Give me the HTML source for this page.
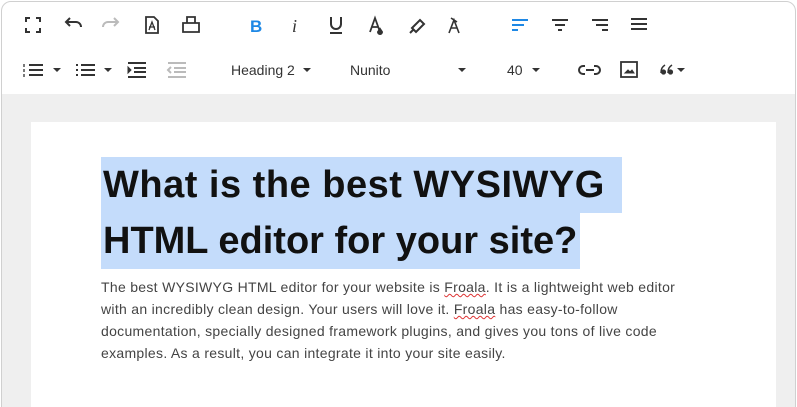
<!DOCTYPE html>
<html><head><meta charset="utf-8"><style>
*{margin:0;padding:0;box-sizing:border-box}
html,body{width:797px;height:407px;overflow:hidden}
body{background:#fff;font-family:"Liberation Sans",sans-serif;position:relative}
.frame{position:absolute;left:1px;top:1px;width:795px;height:460px;border:1px solid #d0d0d0;border-radius:10px;overflow:hidden;background:#fff}
.grey{position:absolute;left:0;top:92px;width:100%;height:400px;background:#efefef}
.page{position:absolute;left:29px;top:120px;width:745px;height:400px;background:#fff}
.ic{position:absolute}
.t{position:absolute;font-size:14px;color:#333;white-space:nowrap}
.car{position:absolute;width:0;height:0;border-left:4px solid transparent;border-right:4px solid transparent;border-top:4px solid #333}
.hl{position:absolute;left:101px;background:#c4dcfb;height:56px;font-weight:900;font-size:38px;letter-spacing:0.5px;color:#111;white-space:nowrap;line-height:56px}
.p{position:absolute;left:101px;font-size:14px;letter-spacing:0.3px;color:#444;white-space:nowrap;line-height:22px}
u{text-decoration:underline wavy #d33;text-decoration-thickness:1px}
</style></head><body>
<div class="frame">
<div class="grey"></div>
<div class="page"></div>
</div>
<svg class="ic" style="left:0;top:0" width="797" height="95" fill="none" stroke="#333" stroke-width="2">
<path d="M26 22v-4h4M36 18h4v4M40 28v4h-4M30 32h-4v-4"/>
<path d="M66 22h10a5 5 0 0 1 5 5" /><path d="M70 18l-4 4 4 4"/>
<g stroke="#bbb"><path d="M118 22h-10a5 5 0 0 0 -5 5"/><path d="M114 18l4 4-4 4"/></g>
<path d="M146 17h8l4 4v12h-12z" stroke-width="1.8"/><path d="M149 30l3-8 3 8M149 27h6" stroke-width="1.3"/>
<path d="M187 23v-6h8v6M183 23h16v9h-16z" stroke-width="1.8"/>
<text x="250" y="32" font-family="Liberation Sans" font-weight="bold" font-size="17" fill="#1e88e5" stroke="none">B</text>
<text x="292" y="32" font-family="Liberation Serif" font-style="italic" font-size="18" fill="#333" stroke="none">i</text>
<path d="M331 17v7a5 5 0 0 0 10 0v-7M330 33h12"/>
<path d="M370 32l5-14 5 14M372 27h6" stroke-width="1.8"/><path d="M380 29l2 3a2 2 0 1 1-4 0z" fill="#333"/>
<path d="M412 28l8-8 4 4-8 8zM410 33l3-3" stroke-width="2"/>
<path d="M449 33l5-13 5 13M451 28h6M451 18l6 4" stroke-width="1.6"/>
<g stroke="#1e88e5"><path d="M512 20h16M512 25h12M512 30h6"/></g>
<path d="M552 20h16M555 25h10M558 30h4"/>
<path d="M592 20h16M596 25h12M602 30h6"/>
<path d="M631 19h16M631 24h16M631 29h16"/>
<path d="M29 65h14M29 70h14M29 75h14"/><path d="M24 64v3M24 69v3M24 74v3" stroke-width="1.3"/>
<path d="M81 65h14M81 70h14M81 75h14"/><path d="M76 65h2M76 70h2M76 75h2"/>
<path d="M128 63h18M134 68h12M134 72h12M128 77h18"/><path d="M128 67l3 3-3 3z" fill="#333" stroke-width="1"/>
<g stroke="#bbb"><path d="M168 63h18M174 68h12M174 72h12M168 77h18"/><path d="M171 67l-3 3 3 3"/></g>
<path d="M585 66h-2a4 4 0 0 0 0 8h2M594 66h2a4 4 0 0 1 0 8h-2M586 70h8"/>
<rect x="621" y="62" width="16" height="15" stroke-width="1.8"/><path d="M625 73l3-3 2 2 2-2 2 3z" fill="#333" stroke-width="1"/>
<path d="M661 73c0-4 1-6 4-8M668 73c0-4 1-6 4-8" stroke-width="1.5"/>
<circle cx="663.5" cy="72" r="2.6" fill="#333" stroke="none"/><circle cx="670.5" cy="72" r="2.6" fill="#333" stroke="none"/>
</svg>
<div class="car" style="left:53px;top:68px"></div>
<div class="car" style="left:104px;top:68px"></div>
<div class="t" style="left:231px;top:62px">Heading 2</div>
<div class="car" style="left:303px;top:68px"></div>
<div class="t" style="left:350px;top:62px">Nunito</div>
<div class="car" style="left:458px;top:68px"></div>
<div class="t" style="left:507px;top:62px">40</div>
<div class="car" style="left:532px;top:68px"></div>
<div class="car" style="left:677px;top:68px"></div>
<div class="hl" style="top:157px;width:521px;padding-left:2px">What is the best WYSIWYG</div>
<div class="hl" style="top:213px;width:479px;padding-left:2px;letter-spacing:0">HTML editor for your site?</div>
<div class="p" style="top:276px">The best WYSIWYG HTML editor for your website is <u>Froala</u>. It is a lightweight web editor</div>
<div class="p" style="top:298px">with an incredibly clean design. Your users will love it. <u>Froala</u> has easy-to-follow</div>
<div class="p" style="top:320px">documentation, specially designed framework plugins, and gives you tons of live code</div>
<div class="p" style="top:342px">examples. As a result, you can integrate it into your site easily.</div>
</body></html>
